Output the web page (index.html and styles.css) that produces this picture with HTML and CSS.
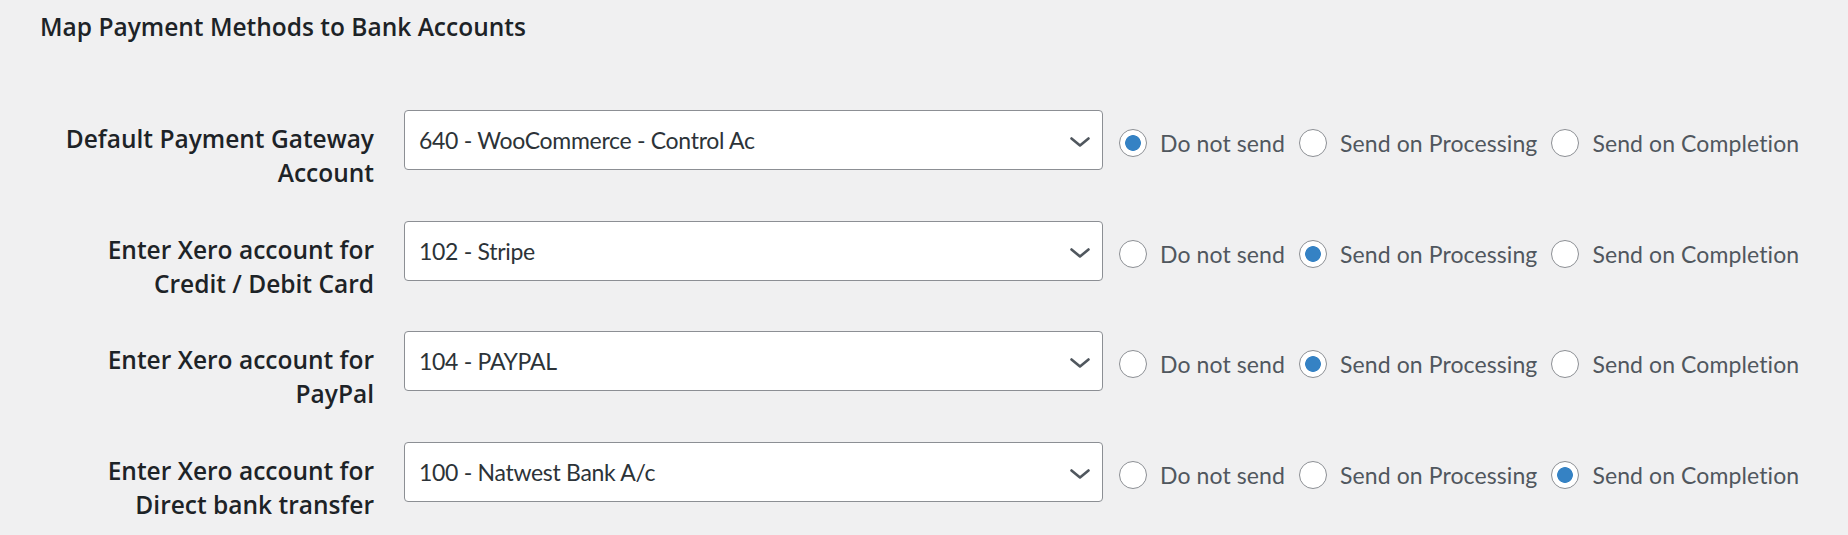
FILE: index.html
```html
<!DOCTYPE html>
<html lang="en">
<head>
  <meta charset="UTF-8">
  <meta name="viewport" content="width=device-width, initial-scale=1.0">
  <title>Map Payment Methods</title>
  <link rel="stylesheet" href="styles.css">
</head>
<body>
  <div class="page">
    <h2 class="section-title">Map Payment Methods to Bank Accounts</h2>

    <div class="mapping">
      <div class="row">
        <label class="row-label" for="acc_default">Default Payment Gateway Account</label>
        <div class="select-wrap">
          <select id="acc_default">
            <option>640 - WooCommerce - Control Ac</option>
          </select>
          <svg class="chevron" viewBox="0 0 20 10"><path d="M1.5 1.5 L10 8.5 L18.5 1.5" /></svg>
        </div>
        <div class="send-options">
          <label class="send-option"><input type="radio" name="send_default" checked> Do not send</label>
          <label class="send-option"><input type="radio" name="send_default"> Send on Processing</label>
          <label class="send-option"><input type="radio" name="send_default"> Send on Completion</label>
        </div>
      </div>

      <div class="row">
        <label class="row-label" for="acc_card">Enter Xero account for Credit / Debit Card</label>
        <div class="select-wrap">
          <select id="acc_card">
            <option>102 - Stripe</option>
          </select>
          <svg class="chevron" viewBox="0 0 20 10"><path d="M1.5 1.5 L10 8.5 L18.5 1.5" /></svg>
        </div>
        <div class="send-options">
          <label class="send-option"><input type="radio" name="send_card"> Do not send</label>
          <label class="send-option"><input type="radio" name="send_card" checked> Send on Processing</label>
          <label class="send-option"><input type="radio" name="send_card"> Send on Completion</label>
        </div>
      </div>

      <div class="row">
        <label class="row-label" for="acc_paypal">Enter Xero account for PayPal</label>
        <div class="select-wrap">
          <select id="acc_paypal">
            <option>104 - PAYPAL</option>
          </select>
          <svg class="chevron" viewBox="0 0 20 10"><path d="M1.5 1.5 L10 8.5 L18.5 1.5" /></svg>
        </div>
        <div class="send-options">
          <label class="send-option"><input type="radio" name="send_paypal"> Do not send</label>
          <label class="send-option"><input type="radio" name="send_paypal" checked> Send on Processing</label>
          <label class="send-option"><input type="radio" name="send_paypal"> Send on Completion</label>
        </div>
      </div>

      <div class="row">
        <label class="row-label" for="acc_bacs">Enter Xero account for Direct bank transfer</label>
        <div class="select-wrap">
          <select id="acc_bacs">
            <option>100 - Natwest Bank A/c</option>
          </select>
          <svg class="chevron" viewBox="0 0 20 10"><path d="M1.5 1.5 L10 8.5 L18.5 1.5" /></svg>
        </div>
        <div class="send-options">
          <label class="send-option"><input type="radio" name="send_bacs"> Do not send</label>
          <label class="send-option"><input type="radio" name="send_bacs"> Send on Processing</label>
          <label class="send-option"><input type="radio" name="send_bacs" checked> Send on Completion</label>
        </div>
      </div>
    </div>
  </div>
</body>
</html>
```

FILE: styles.css
```css
body {
  margin: 0;
  background: #f0f0f1;
  font-family: "Open Sans", "Noto Sans", sans-serif;
  color: #1d2327;
}
.page {
  padding: 10px 40px 0;
}
.section-title {
  margin: 0;
  font-size: 24.5px;
  line-height: 34px;
  font-weight: 600;
}
.mapping {
  margin-top: 66px;
}
.row {
  display: flex;
  align-items: flex-start;
}
.row + .row {
  margin-top: 30.67px;
}
.row-label {
  width: 334px;
  flex-shrink: 0;
  padding-top: 12px;
  text-align: right;
  font-size: 24.5px;
  line-height: 34px;
  font-weight: 600;
}
.select-wrap {
  position: relative;
  width: 699px;
  margin-left: 30px;
  flex-shrink: 0;
}
.select-wrap select {
  display: block;
  width: 100%;
  height: 60px;
  margin: 0;
  padding: 0 50px 0 14px;
  border: 1px solid #8c8f94;
  border-radius: 4px;
  background: #fff;
  color: #2c3338;
  font-family: Lato, "Noto Sans", sans-serif;
  font-size: 23px;
  letter-spacing: -0.3px;
  appearance: none;
  -webkit-appearance: none;
}
.chevron {
  position: absolute;
  right: 13px;
  top: 27px;
  width: 20px;
  height: 10px;
  pointer-events: none;
}
.chevron path {
  fill: none;
  stroke: #50575e;
  stroke-width: 2.6;
  stroke-linecap: round;
  stroke-linejoin: round;
}
.send-options {
  display: flex;
  gap: 14px;
  margin-left: 16px;
  padding-top: 19px;
}
.send-option {
  display: flex;
  align-items: center;
  gap: 13px;
  font-family: Lato, "Noto Sans", sans-serif;
  font-size: 23px;
  letter-spacing: 0.1px;
  color: #50575e;
  white-space: nowrap;
}
.send-option input {
  appearance: none;
  -webkit-appearance: none;
  width: 28px;
  height: 28px;
  margin: 0;
  border: 1px solid #8c8f94;
  border-radius: 50%;
  background: #fff;
}
.send-option input:checked {
  background: radial-gradient(circle, #3582c4 0 7.5px, #fff 8.2px);
}
```
